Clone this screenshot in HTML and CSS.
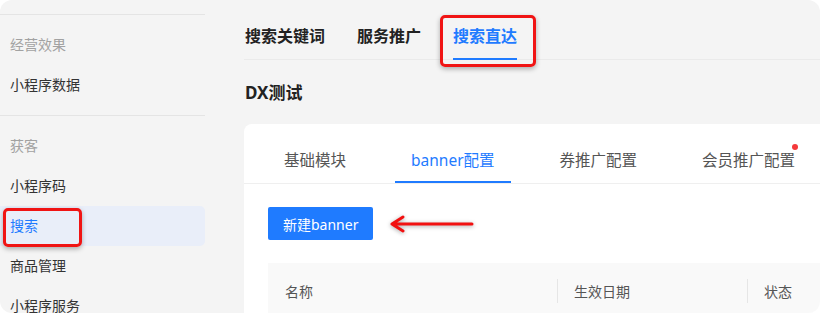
FILE: index.html
```html
<!DOCTYPE html>
<html lang="zh-CN">
<head>
    <meta charset="UTF-8">
    <meta name="viewport" content="width=device-width, initial-scale=1.0">
    <title>搜索直达</title>
    <link rel="stylesheet" href="styles.css">
</head>
<body>
    <div class="app">
        <aside class="sidebar">
            <div class="side-group">
                <div class="side-title">经营效果</div>
                <div class="side-item">小程序数据</div>
            </div>
            <div class="side-group">
                <div class="side-title">获客</div>
                <div class="side-item">小程序码</div>
                <div class="side-item active">
                    搜索
                    <span class="mark mark-side"></span>
                </div>
                <div class="side-item">商品管理</div>
                <div class="side-item">小程序服务</div>
            </div>
        </aside>

        <main class="main">
            <nav class="top-tabs">
                <div class="top-tab">搜索关键词</div>
                <div class="top-tab">服务推广</div>
                <div class="top-tab active">
                    搜索直达
                    <span class="mark mark-top"></span>
                </div>
            </nav>

            <h2 class="page-title">DX测试</h2>

            <section class="card">
                <div class="card-tabs">
                    <div class="card-tab">基础模块</div>
                    <div class="card-tab active">banner配置</div>
                    <div class="card-tab">券推广配置</div>
                    <div class="card-tab"><span class="dot-wrap">会员推广配置<i class="dot"></i></span></div>
                </div>

                <div class="card-body">
                    <div class="toolbar">
                        <button class="btn-primary">新建banner</button>
                        <svg class="arrow" width="90" height="24" viewBox="0 0 90 24">
                            <path d="M84 12 H4 M15 5 L4 12 L15 19" fill="none" stroke="#f21010" stroke-width="3" stroke-linecap="round" stroke-linejoin="round"/>
                        </svg>
                    </div>

                    <div class="table-head">
                        <div class="th th-name">名称</div>
                        <div class="th th-date">生效日期</div>
                        <div class="th th-status">状态</div>
                    </div>
                </div>
            </section>
        </main>
    </div>
</body>
</html>
```

FILE: styles.css
```css
:root {
    --blue: #1f7bff;
    --page: #f4f4f4;
    --line: #e4e4e4;
    --text: #333;
    --mark: #f01414;
}

body {
    margin: 0;
    background-color: #fff;
    font-family: "Noto Sans", "Noto Sans CJK SC", sans-serif;
    color: var(--text);
}

.app {
    width: 820px;
    height: 313px;
    display: flex;
    background-color: var(--page);
    border-radius: 12px;
    overflow: hidden;
}

/* sidebar */
.sidebar {
    width: 205px;
    flex-shrink: 0;
    padding-top: 14px;
}

.side-group {
    border-top: 1px solid var(--line);
    padding: 10px 0;
}

.side-title,
.side-item {
    height: 40px;
    line-height: 40px;
    padding-left: 10px;
    font-size: 14px;
}

.side-title {
    color: #a2a2a2;
}

.side-item {
    position: relative;
    color: var(--text);
}

.side-item.active {
    color: var(--blue);
    background-color: #e9eef9;
    border-radius: 0 5px 5px 0;
}

/* red annotation boxes */
.mark {
    position: absolute;
    box-sizing: border-box;
    border: 3px solid var(--mark);
    border-radius: 5px;
    box-shadow: 0 2px 5px rgba(0, 0, 0, 0.3);
}

.mark-side {
    left: 3px;
    top: 2px;
    width: 79px;
    height: 39px;
}

.mark-top {
    left: -13px;
    right: -19px;
    top: 15px;
    bottom: -9px;
}

/* main */
.main {
    flex: 1;
    margin-left: 39px;
    display: flex;
    flex-direction: column;
    min-width: 0;
}

.top-tabs {
    display: flex;
    gap: 32px;
    border-bottom: 1px solid #eaeaea;
    padding-left: 1px;
}

.top-tab {
    position: relative;
    padding: 25px 0 11px;
    line-height: 22px;
    font-size: 16px;
    font-weight: 700;
    color: #222;
    border-bottom: 2px solid transparent;
    margin-bottom: -1px;
}

.top-tab.active {
    color: var(--blue);
    border-bottom-color: var(--blue);
}

.page-title {
    margin: 21px 0 19px 1px;
    line-height: 24px;
    font-size: 17px;
    font-weight: 700;
    color: #222;
}

.card {
    flex: 1;
    background-color: #fff;
    border-radius: 8px 0 0 0;
}

.card-tabs {
    display: flex;
    gap: 33px;
    padding-left: 24px;
    border-bottom: 1px solid #efefef;
}

.card-tab {
    padding: 25px 16px 10px;
    line-height: 22px;
    font-size: 15.5px;
    color: #555;
    border-bottom: 2px solid transparent;
    white-space: nowrap;
}

.card-tab.active {
    color: var(--blue);
    border-bottom-color: var(--blue);
}

.dot-wrap {
    position: relative;
}

.dot {
    position: absolute;
    right: -3px;
    top: -5px;
    width: 6px;
    height: 6px;
    border-radius: 50%;
    background-color: #f5393b;
}

.card-body {
    padding: 23px 0 0 24px;
}

.toolbar {
    display: flex;
    align-items: center;
}

.btn-primary {
    height: 33px;
    padding: 0 15px;
    border: none;
    border-radius: 2px;
    background-color: var(--blue);
    color: #fff;
    font-family: inherit;
    font-size: 14px;
    cursor: pointer;
}

.arrow {
    margin-left: 15px;
    filter: drop-shadow(0 1px 2px rgba(0, 0, 0, 0.35));
}

.table-head {
    display: flex;
    margin-top: 23px;
    background-color: #f9f9f9;
}

.th {
    position: relative;
    padding: 18px 17px;
    line-height: 22px;
    font-size: 14px;
    color: #555;
}

.th + .th::before {
    content: "";
    position: absolute;
    left: 0;
    top: 16px;
    height: 24px;
    width: 1px;
    background-color: #e6e6e6;
}

.th-name {
    width: 289px;
    box-sizing: border-box;
}

.th-date {
    width: 190px;
    box-sizing: border-box;
}

.th-status {
    flex: 1;
}
```
